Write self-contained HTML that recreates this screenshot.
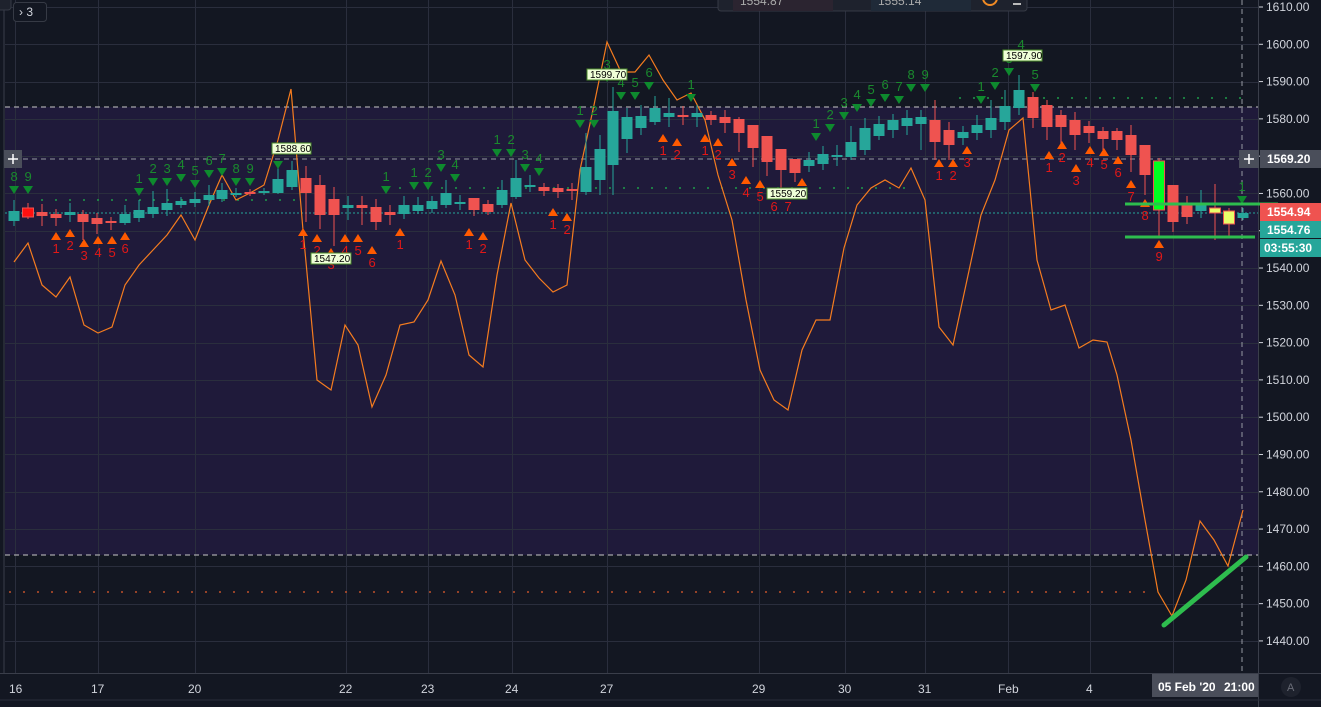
<!DOCTYPE html>
<html><head><meta charset="utf-8"><style>
html,body{margin:0;padding:0;background:#131722;width:1321px;height:707px;overflow:hidden;font-family:"Liberation Sans",sans-serif}
svg{position:absolute;left:0;top:0}
</style></head><body>
<svg id="s" width="1321" height="707" xmlns="http://www.w3.org/2000/svg">
<rect x="0" y="0" width="1321" height="707" fill="#131722"/>
<rect x="5" y="107" width="1253" height="448" fill="#1f1a3a"/>
<g id="grid" stroke="#2a2e3d" stroke-width="1"></g>
<line x1="4" y1="0" x2="4" y2="673" stroke="#3a3e4a"/>
<line x1="1258.5" y1="0" x2="1258.5" y2="707" stroke="#3a3e4a"/>
<line x1="0" y1="673.5" x2="1321" y2="673.5" stroke="#3a3e4a"/>
<line x1="5" y1="107" x2="1258" y2="107" stroke="#c8c8c8" stroke-dasharray="5,4"/>
<line x1="5" y1="555" x2="1258" y2="555" stroke="#c8c8c8" stroke-dasharray="5,4"/>
<line x1="5" y1="159" x2="1258" y2="159" stroke="#9598a1" stroke-dasharray="5,4"/>
<line x1="1242" y1="0" x2="1242" y2="673" stroke="#9598a1" stroke-dasharray="5,4"/>
<line x1="5" y1="213" x2="1258" y2="213" stroke="#26a69a" stroke-dasharray="2,2"/>
<g id="dots"></g>
<polyline id="orange" fill="none" stroke="#f57c1f" stroke-width="1.2"/>
<g id="candles"></g>
<g id="marks" font-size="13"></g>
<line x1="1125" y1="204" x2="1278" y2="204" stroke="#2ebd4e" stroke-width="3"/>
<line x1="1125" y1="237" x2="1255" y2="237" stroke="#2ebd4e" stroke-width="3"/>
<line x1="1164" y1="625" x2="1246" y2="557" stroke="#2ebd4e" stroke-width="5" stroke-linecap="round"/>
<g font-size="10" font-family="Liberation Sans" fill="#000">
<rect x="272" y="143" width="39" height="11" fill="#f0ffd8" stroke="#4a8a2a"/><text x="275" y="152">1588.60</text>
<rect x="311" y="253" width="40" height="11" fill="#f0ffd8" stroke="#4a8a2a"/><text x="314" y="262">1547.20</text>
<rect x="587" y="69" width="40" height="11" fill="#f0ffd8" stroke="#4a8a2a"/><text x="590" y="78">1599.70</text>
<rect x="767" y="188" width="40" height="11" fill="#f0ffd8" stroke="#4a8a2a"/><text x="770" y="197">1559.20</text>
<rect x="1003" y="50" width="39" height="11" fill="#f0ffd8" stroke="#4a8a2a"/><text x="1006" y="59">1597.90</text>
</g>
<g font-size="12" fill="#d1d4dc" id="axis"></g>
<rect x="1239" y="150" width="20" height="18" fill="#4a4e5a"/>
<path d="M1249 154v10M1244 159h10" stroke="#fff" stroke-width="1.5"/>
<rect x="1260" y="150" width="61" height="18" fill="#4a4e5a"/>
<text x="1267" y="163" font-size="12" fill="#fff" font-weight="bold">1569.20</text>
<rect x="4" y="150" width="18" height="18" fill="#4a4e5a"/>
<path d="M13 154v10M8 159h10" stroke="#fff" stroke-width="1.5"/>
<rect x="1260" y="203" width="61" height="18" fill="#ef5350"/>
<text x="1267" y="216" font-size="12" fill="#fff" font-weight="bold">1554.94</text>
<rect x="1260" y="221" width="61" height="17" fill="#26a69a"/>
<text x="1267" y="234" font-size="12" fill="#fff" font-weight="bold">1554.76</text>
<rect x="1260" y="239" width="61" height="18" fill="#26a69a"/>
<text x="1264" y="252" font-size="12" fill="#fff" font-weight="bold">03:55:30</text>
<g font-size="12" fill="#d1d4dc">
<text x="9" y="693">16</text><text x="91" y="693">17</text><text x="188" y="693">20</text><text x="339" y="693">22</text><text x="421" y="693">23</text><text x="505" y="693">24</text><text x="600" y="693">27</text><text x="752" y="693">29</text><text x="838" y="693">30</text><text x="918" y="693">31</text><text x="998" y="693">Feb</text><text x="1086" y="693">4</text>
</g>
<rect x="1152" y="674" width="106" height="23" fill="#4a4e5a"/>
<text x="1158" y="691" font-size="12" fill="#fff" font-weight="bold">05 Feb '20</text>
<text x="1224" y="691" font-size="12" fill="#fff" font-weight="bold">21:00</text>
<circle cx="1291" cy="687" r="10" fill="#1e222d"/>
<text x="1287" y="691" font-size="11" fill="#6a6d78">A</text>
<line x1="0" y1="700" x2="1321" y2="700" stroke="#2a2e39"/>
<rect x="13.5" y="2.5" width="33" height="19" rx="3" fill="#131722" stroke="#363a45"/>
<text x="19" y="16" font-size="12" fill="#d1d4dc">›  3</text>
<rect x="-5" y="-5" width="16" height="15" rx="3" fill="#1e222d" stroke="#363a45"/>
<rect x="718" y="-5" width="309" height="16" rx="3" fill="#1e222d" stroke="#363a45"/>
<rect x="733" y="-5" width="100" height="16" fill="#2b2430"/>
<rect x="871" y="-5" width="100" height="16" fill="#1f2a38"/>
<text x="740" y="5" font-size="12" fill="#aaa">1554.87</text>
<text x="878" y="5" font-size="12" fill="#aaa">1555.14</text>
<circle cx="990" cy="-2" r="7" fill="none" stroke="#f08a24" stroke-width="2"/>
<line x1="1013" y1="4" x2="1021" y2="4" stroke="#bbb" stroke-width="2"/>
</svg>
<script>
const NS="http://www.w3.org/2000/svg";
function el(p,t,a,txt){const e=document.createElementNS(NS,t);for(const k in a)e.setAttribute(k,a[k]);if(txt!==undefined)e.textContent=txt;document.getElementById(p).appendChild(e);return e;}
[15,98,195,346,428,512,607,759,845,925,1008,1090,1173].forEach(x=>el('grid','line',{x1:x+.5,y1:0,x2:x+.5,y2:673}));
for(let p=1610;p>=1440;p-=10){const y=7+(1610-p)*3.729;el('grid','line',{x1:5,y1:Math.round(y)+.5,x2:1258,y2:Math.round(y)+.5});
 el('axis','text',{x:1266,y:y+4},p.toFixed(2));
 el('axis','line',{x1:1259,y1:y,x2:1263,y2:y,stroke:'#d1d4dc'});}
function dots(x0,x1,y,c,s){for(let x=x0;x<=x1;x+=s)el('dots','circle',{cx:x,cy:y,r:1,fill:c});}
dots(42,300,200,'#1f9a4a',14);dots(400,910,188,'#1f9a4a',14);dots(960,1245,98,'#1f9a4a',14);
dots(10,1150,592,'#c0502a',14);dots(1160,1245,237,'#9a4030',14);
const o=[[14,262],[28,243],[42,285],[56,297],[70,277],[84,325],[98,333],[112,327],[125,285],[139,265],[153,250],[167,235],[181,215],[195,240],[209,205],[222,175],[236,200],[250,193],[264,185],[278,140],[291,89],[303,230],[317,380],[331,390],[345,325],[358,345],[372,407],[386,375],[400,325],[414,322],[428,300],[441,261],[455,295],[469,355],[483,367],[497,275],[511,203],[525,260],[539,278],[553,292],[567,285],[580,170],[594,105],[607,42],[621,72],[635,72],[649,55],[663,80],[677,100],[691,93],[705,120],[718,175],[732,220],[746,300],[760,370],[774,400],[788,410],[802,350],[816,320],[830,320],[844,248],[857,205],[871,188],[885,180],[899,188],[911,168],[925,200],[939,327],[953,345],[967,280],[981,215],[995,180],[1009,130],[1023,118],[1037,260],[1051,310],[1065,305],[1079,348],[1093,340],[1107,342],[1117,375],[1131,440],[1145,520],[1158,592],[1172,616],[1186,580],[1200,521],[1214,540],[1228,566],[1243,510]];
document.getElementById('orange').setAttribute('points',o.map(p=>p.join(',')).join(' '));
const T='#26a69a',R='#ef5350';
const c=[[14,211,221,200,226,T],[28,208,217,203,219,'#ff1010'],[42,212,216,204,226,R],[56,214,218,209,226,R],[70,212,215,203,222,T],[83,214,222,210,240,R],[97,218,224,213,234,R],[111,221,223,217,230,R],[125,214,223,205,225,T],[139,210,218,200,222,T],[153,207,214,191,218,T],[167,203,210,189,216,T],[181,201,205,197,208,T],[195,199,203,192,207,T],[209,195,200,185,206,T],[222,190,199,183,202,T],[236,193,195,188,197,T],[250,192,194,189,196,R],[264,191,193,188,195,T],[278,179,193,164,194,T],[292,170,187,161,190,T],[306,178,193,166,222,R],[320,185,215,175,229,R],[334,199,215,187,246,R],[348,205,208,196,220,T],[362,205,208,196,225,R],[376,207,222,199,230,R],[390,212,215,205,225,R],[404,205,214,196,219,T],[418,205,211,197,214,T],[432,201,209,196,213,T],[446,193,205,180,208,T],[460,202,204,195,210,T],[474,198,210,198,216,R],[488,204,212,200,215,R],[502,190,205,180,208,T],[516,178,197,160,199,T],[530,185,187,175,192,T],[544,187,191,183,196,R],[558,188,192,184,198,R],[572,189,191,183,200,R],[586,167,192,133,195,T],[600,149,180,135,195,T],[613,111,165,87,195,T],[627,117,139,108,153,T],[641,116,128,105,135,T],[655,108,122,96,125,T],[669,113,117,98,127,T],[683,115,117,106,125,R],[697,113,117,105,127,T],[711,115,120,111,125,R],[725,117,123,110,133,R],[739,119,133,117,152,R],[753,125,148,125,167,R],[767,136,162,136,176,R],[781,149,170,149,188,R],[795,159,173,159,182,R],[809,160,166,152,172,T],[823,154,164,146,170,T],[837,155,157,145,166,T],[851,142,157,126,160,T],[865,128,150,118,155,T],[879,124,136,116,140,T],[893,120,130,114,138,T],[907,118,126,110,135,T],[921,117,124,110,150,T],[935,120,142,100,160,R],[949,130,145,122,160,R],[963,132,138,126,145,T],[977,125,133,115,140,T],[991,118,130,100,138,T],[1005,106,122,90,130,T],[1019,90,108,75,115,T],[1033,97,118,92,128,R],[1047,105,127,100,140,R],[1061,115,127,110,145,R],[1075,120,135,112,150,R],[1089,126,133,121,143,R],[1103,131,139,127,150,R],[1117,131,140,128,150,R],[1131,135,155,125,172,R],[1145,145,175,145,195,R],[1159,161,210,158,236,'#00ff20'],[1173,185,222,185,232,R],[1187,203,217,196,224,R],[1201,204,211,190,218,T],[1215,208,213,184,240,'#e8ff6a'],[1229,211,224,208,237,'#e8ff6a'],[1243,213,218,208,220,T]];
c.forEach(([x,t,b,wt,wb,col])=>{const stroke=(col=='#e8ff6a'||col=='#00ff20'||col=='#ff1010')?R:col;
 el('candles','line',{x1:x,y1:wt,x2:x,y2:wb,stroke:stroke});
 el('candles','rect',{x:x-5.5,y:t,width:11,height:Math.max(2,b-t),fill:col,stroke:(col==T||col==R)?'none':stroke});});
const g=[[14,190,8],[28,190,9],[139,192,1],[153,182,2],[167,182,3],[181,178,4],[195,184,5],[209,174,6],[222,172,7],[236,182,8],[250,182,9],[278,165,''],[386,190,1],[414,186,1],[428,186,2],[441,168,3],[455,178,4],[497,153,1],[511,153,2],[525,168,3],[539,172,4],[580,124,1],[594,124,2],[607,78,3],[621,96,4],[635,96,5],[649,86,6],[691,98,1],[816,137,1],[830,128,2],[844,116,3],[857,108,4],[871,103,5],[885,98,6],[899,100,7],[911,88,8],[925,88,9],[981,100,1],[995,86,2],[1009,72,3],[1021,58,4],[1035,88,5],[1242,200,1]];
g.forEach(([x,y,n])=>{el('marks','path',{d:`M${x-5} ${y-4}h10l-5 8z`,fill:'#0e8a2e'});if(n!=='')el('marks','text',{x:x-3.5,y:y-9,fill:'#1a8a2e'},n);});
const r=[[56,236,1],[70,233,2],[84,243,3],[98,240,4],[112,240,5],[125,236,6],[303,232,1],[317,238,2],[331,252,3],[345,238,4],[358,238,5],[372,250,6],[400,232,1],[469,232,1],[483,236,2],[553,212,1],[567,217,2],[663,138,1],[677,142,2],[705,138,1],[718,142,2],[732,162,3],[746,180,4],[760,184,5],[774,194,6],[788,194,7],[802,182,''],[939,163,1],[953,163,2],[967,150,3],[1049,155,1],[1062,145,2],[1076,168,3],[1090,150,4],[1104,152,5],[1118,160,6],[1131,184,7],[1145,203,8],[1159,244,9]];
r.forEach(([x,y,n])=>{el('marks','path',{d:`M${x-5} ${y+4}l5-8l5 8z`,fill:'#ff5a00'});if(n!=='')el('marks','text',{x:x-3.5,y:y+17,fill:'#e01818'},n);});
</script>
</body></html>
